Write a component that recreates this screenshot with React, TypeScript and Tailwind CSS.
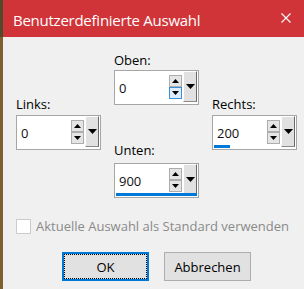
import React from "react";

function Tri({ down, w, h }: { down?: boolean; w: number; h: number }) {
  return (
    <svg width={w} height={h} viewBox={`0 0 ${w} ${h}`} className="block">
      {down ? (
        <polygon points={`0,0 ${w},0 ${w / 2},${h}`} fill="#000" />
      ) : (
        <polygon points={`0,${h} ${w},${h} ${w / 2},0`} fill="#000" />
      )}
    </svg>
  );
}

function SpinBox({
  value,
  bar,
  hotDown,
}: {
  value: string;
  bar?: "short" | "full";
  hotDown?: boolean;
}) {
  return (
    <div className="relative w-[85px] h-[35px] border border-[#a6a6a6] bg-white flex">
      <div className="flex-1 flex items-center pl-[4px] text-[13px] leading-[16px] text-[#101010]">
        {value}
      </div>
      <div className="w-[13px] flex flex-col mt-[4px]">
        <div className="h-[12px] border border-[#adadad] bg-[#e5e5e5] flex items-center justify-center">
          <Tri w={7} h={4} />
        </div>
        <div
          className={
            hotDown
              ? "h-[12px] border border-[#3b8fd9] bg-[#dcecfc] flex items-center justify-center"
              : "h-[12px] border border-[#adadad] bg-[#e5e5e5] flex items-center justify-center"
          }
        >
          <Tri down w={7} h={4} />
        </div>
      </div>
      <div className="w-[14px] h-[31px] ml-[1px] mr-[1px] bg-[#e1e1e1] border-l border-t border-l-white border-t-white border-r border-b border-r-[#696969] border-b-[#8a8a8a] flex items-start justify-center pt-[12px]">
        <Tri down w={9} h={5} />
      </div>
      {bar === "short" && (
        <div className="absolute left-[1px] bottom-[1px] w-[16px] h-[3px] bg-[#0078d7]" />
      )}
      {bar === "full" && (
        <div className="absolute left-[1px] bottom-[1px] w-[81px] h-[3px] bg-[#0078d7]" />
      )}
    </div>
  );
}

export default function App() {
  return (
    <div className="w-[304px] h-[289px] flex overflow-hidden bg-[#f0f0f0] font-['Open_Sans','Noto_Sans',sans-serif]">
      <div className="w-[3px] flex flex-col">
        <div className="h-[37px] bg-[#514a2b]" />
        <div className="flex-1 bg-[#80602f]" />
      </div>
      <div className="flex-1 flex flex-col">
        <div className="h-[37px] bg-[#d13438] flex justify-between text-white">
          <div className="ml-[10px] mt-[10px] text-[15px] leading-[20px] tracking-[-0.25px]">
            Benutzerdefinierte Auswahl
          </div>
          <svg width="10" height="10" viewBox="0 0 10 10" className="mt-[13px] mr-[13px]">
            <path d="M0.5 0.5 L9.5 9.5 M9.5 0.5 L0.5 9.5" stroke="#fff" strokeWidth="1.1" />
          </svg>
        </div>
        <div className="flex-1 flex flex-col text-[13px] text-black">
          <div className="flex pl-[13px] gap-[13px]">
            <div className="flex flex-col pt-[59px]">
              <div className="h-[16px] leading-[16px] mb-[3px]">Links:</div>
              <SpinBox value="0" />
            </div>
            <div className="flex flex-col pt-[15px]">
              <div className="h-[16px] leading-[16px] mb-[2px]">Oben:</div>
              <SpinBox value="0" hotDown />
              <div className="h-[16px] leading-[16px] mt-[37px] mb-[5px]">Unten:</div>
              <SpinBox value="900" bar="full" />
            </div>
            <div className="flex flex-col pt-[59px]">
              <div className="h-[16px] leading-[16px] mb-[3px]">Rechts:</div>
              <SpinBox value="200" bar="short" />
            </div>
          </div>
          <div className="flex items-center h-[15px] mt-[21px] pl-[13px] gap-[5px]">
            <div className="w-[15px] h-[15px] border border-[#cccccc] bg-white" />
            <div className="leading-[15px] text-[#8a8a8a] whitespace-nowrap">
              Aktuelle Auswahl als Standard verwenden
            </div>
          </div>
          <div className="flex mt-[18px] pl-[59px] gap-[15px]">
            <div className="relative w-[87px] h-[29px] border-2 border-[#0078d7] bg-[#e1e1e1] flex items-center justify-center">
              <div className="absolute inset-0 border border-dotted border-black" />
              <span className="leading-[16px]">OK</span>
            </div>
            <div className="w-[87px] h-[29px] border border-[#adadad] bg-[#e1e1e1] flex items-center justify-center">
              <span className="leading-[16px]">Abbrechen</span>
            </div>
          </div>
        </div>
      </div>
    </div>
  );
}
